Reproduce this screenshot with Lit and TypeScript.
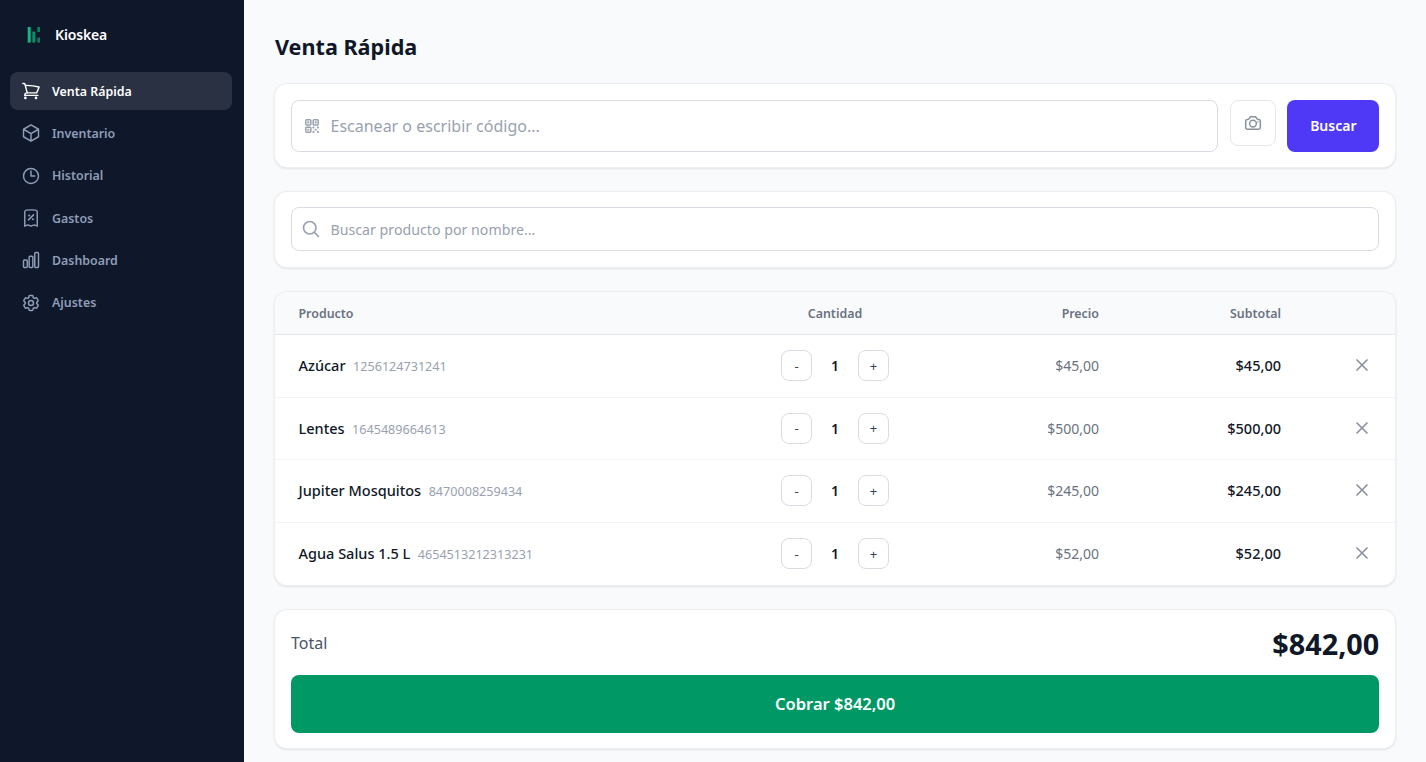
import { LitElement, html, css, svg } from "lit";
import { customElement } from "lit/decorators.js";

const P: Record<string, string> = {
  cart: "M2.25 3h1.386c.51 0 .955.343 1.087.835l.383 1.437M7.5 14.25a3 3 0 0 0-3 3h15.75m-12.75-3h11.218c1.121-2.3 2.1-4.684 2.924-7.138a60.114 60.114 0 0 0-16.536-1.84M7.5 14.25 5.106 5.272M6 20.25a.75.75 0 1 1-1.5 0 .75.75 0 0 1 1.5 0Zm12.75 0a.75.75 0 1 1-1.5 0 .75.75 0 0 1 1.5 0Z",
  cube: "m21 7.5-9-5.25L3 7.5m18 0-9 5.25m9-5.25v9l-9 5.25M3 7.5l9 5.25M3 7.5v9l9 5.25m0-9v9",
  clock: "M12 6v6h4.5m4.5 0a9 9 0 1 1-18 0 9 9 0 0 1 18 0Z",
  receipt: "m9 14.25 6-6m4.5-3.493V21.75l-3.75-1.5-3.75 1.5-3.75-1.5-3.75 1.5V4.757c0-1.108.806-2.057 1.907-2.185a48.507 48.507 0 0 1 11.186 0c1.1.128 1.907 1.077 1.907 2.185ZM9.75 9h.008v.008H9.75V9Zm.375 0a.375.375 0 1 1-.75 0 .375.375 0 0 1 .75 0Zm4.125 4.5h.008v.008h-.008V13.5Zm.375 0a.375.375 0 1 1-.75 0 .375.375 0 0 1 .75 0Z",
  chart: "M3 13.125C3 12.504 3.504 12 4.125 12h2.25c.621 0 1.125.504 1.125 1.125v6.75C7.5 20.496 6.996 21 6.375 21h-2.25A1.125 1.125 0 0 1 3 19.875v-6.75ZM9.75 8.625c0-.621.504-1.125 1.125-1.125h2.25c.621 0 1.125.504 1.125 1.125v11.25c0 .621-.504 1.125-1.125 1.125h-2.25a1.125 1.125 0 0 1-1.125-1.125V8.625ZM16.5 4.125c0-.621.504-1.125 1.125-1.125h2.25C20.496 3 21 3.504 21 4.125v15.75c0 .621-.504 1.125-1.125 1.125h-2.25a1.125 1.125 0 0 1-1.125-1.125V4.125Z",
  cog: "M9.594 3.94c.09-.542.56-.94 1.11-.94h2.593c.55 0 1.02.398 1.11.94l.213 1.281c.063.374.313.686.645.87.074.04.147.083.22.127.325.196.72.257 1.075.124l1.217-.456a1.125 1.125 0 0 1 1.37.49l1.296 2.247a1.125 1.125 0 0 1-.26 1.431l-1.003.827c-.293.241-.438.613-.43.992a7.723 7.723 0 0 1 0 .255c-.008.378.137.75.43.991l1.004.827c.424.35.534.955.26 1.43l-1.298 2.247a1.125 1.125 0 0 1-1.369.491l-1.217-.456c-.355-.133-.75-.072-1.076.124a6.47 6.47 0 0 1-.22.128c-.331.183-.581.495-.644.869l-.213 1.281c-.09.543-.56.94-1.11.94h-2.594c-.55 0-1.019-.398-1.11-.94l-.213-1.281c-.062-.374-.312-.686-.644-.87a6.52 6.52 0 0 1-.22-.127c-.325-.196-.72-.257-1.076-.124l-1.217.456a1.125 1.125 0 0 1-1.369-.49l-1.297-2.247a1.125 1.125 0 0 1 .26-1.431l1.004-.827c.292-.24.437-.613.43-.991a6.932 6.932 0 0 1 0-.255c.007-.38-.138-.751-.43-.992l-1.004-.827a1.125 1.125 0 0 1-.26-1.43l1.297-2.247a1.125 1.125 0 0 1 1.37-.491l1.216.456c.356.133.751.072 1.076-.124.072-.044.146-.086.22-.128.332-.183.582-.495.644-.869l.214-1.28Z M15 12a3 3 0 1 1-6 0 3 3 0 0 1 6 0Z",
  camera: "M6.827 6.175A2.31 2.31 0 0 1 5.186 7.23c-.38.054-.757.112-1.134.175C2.999 7.58 2.25 8.507 2.25 9.574V18a2.25 2.25 0 0 0 2.25 2.25h15A2.25 2.25 0 0 0 21.75 18V9.574c0-1.067-.75-1.994-1.802-2.169a47.865 47.865 0 0 0-1.134-.175 2.31 2.31 0 0 1-1.64-1.055l-.822-1.316a2.192 2.192 0 0 0-1.736-1.039 48.774 48.774 0 0 0-5.232 0 2.192 2.192 0 0 0-1.736 1.039l-.821 1.316Z M16.5 12.75a4.5 4.5 0 1 1-9 0 4.5 4.5 0 0 1 9 0ZM18.75 10.5h.008v.008h-.008V10.5Z",
  search: "m21 21-5.197-5.197m0 0A7.5 7.5 0 1 0 5.196 5.196a7.5 7.5 0 0 0 10.607 10.607Z",
  x: "M6 18 18 6M6 6l12 12",
  qr: "M3.75 4.875c0-.621.504-1.125 1.125-1.125h4.5c.621 0 1.125.504 1.125 1.125v4.5c0 .621-.504 1.125-1.125 1.125h-4.5A1.125 1.125 0 0 1 3.75 9.375v-4.5ZM3.75 14.625c0-.621.504-1.125 1.125-1.125h4.5c.621 0 1.125.504 1.125 1.125v4.5c0 .621-.504 1.125-1.125 1.125h-4.5a1.125 1.125 0 0 1-1.125-1.125v-4.5ZM13.5 4.875c0-.621.504-1.125 1.125-1.125h4.5c.621 0 1.125.504 1.125 1.125v4.5c0 .621-.504 1.125-1.125 1.125h-4.5A1.125 1.125 0 0 1 13.5 9.375v-4.5Z M6.75 6.75h.75v.75h-.75v-.75ZM6.75 16.5h.75v.75h-.75v-.75ZM16.5 6.75h.75v.75h-.75v-.75ZM13.5 13.5h.75v.75h-.75v-.75ZM13.5 19.5h.75v.75h-.75v-.75ZM19.5 13.5h.75v.75h-.75v-.75ZM19.5 19.5h.75v.75h-.75v-.75ZM16.5 16.5h.75v.75h-.75v-.75Z",
};

const icon = (n: string, s: number, w = 2) => html`<svg class="ic" width=${s} height=${s} viewBox="0 0 24 24" fill="none" stroke="currentColor" stroke-width=${w} stroke-linecap="round" stroke-linejoin="round">${svg`<path d=${P[n]}></path>`}</svg>`;

const NAV = [
  ["cart", "Venta Rápida"],
  ["cube", "Inventario"],
  ["clock", "Historial"],
  ["receipt", "Gastos"],
  ["chart", "Dashboard"],
  ["cog", "Ajustes"],
];

const ROWS = [
  ["Azúcar", "1256124731241", "$45,00"],
  ["Lentes", "1645489664613", "$500,00"],
  ["Jupiter Mosquitos", "8470008259434", "$245,00"],
  ["Agua Salus 1.5 L", "4654513212313231", "$52,00"],
];

@customElement("app-root")
export class AppRoot extends LitElement {
  static styles = css`
    :host { display: block; height: 762px; overflow: hidden; font-family: "Noto Sans", "Open Sans", sans-serif; color: #101828; }
    * { box-sizing: border-box; }
    .ic { display: block; flex: none; }
    .app { display: flex; height: 762px; background: #f9fafb; }
    .side { width: 244px; flex: none; background: #0f172a; padding: 0 12px 0 10px; }
    .brand { height: 72px; display: flex; align-items: center; gap: 14px; padding-left: 17px; color: #fff; font-size: 14px; font-weight: 600; letter-spacing: -0.15px; padding-bottom: 3px; }
    .logo { display: block; }
    nav { display: flex; flex-direction: column; gap: 4px; }
    .item { height: 38.3px; display: flex; align-items: center; gap: 11px; padding-left: 11px; border-radius: 8px; color: #8e9db8; font-size: 12.4px; font-weight: 600; }
    .item.on { background: #2a3142; color: #fff; }
    .main { flex: 1; min-width: 0; padding: 30px 30.7px 0 31px; display: flex; flex-direction: column; }
    h1 { margin: 0 0 20px; font-size: 21.6px; line-height: 34px; font-weight: 700; color: #101828; }
    .card { background: #fff; border-radius: 12px; box-shadow: 0 0 0 1px #eceef1, 0 1px 3px rgba(16,24,40,.2); margin-bottom: 25px; }
    .scan { display: flex; align-items: flex-start; padding: 16px; height: 83px; gap: 12px; }
    .field { flex: 1; display: flex; align-items: center; border: 1px solid #d9dce2; border-radius: 8px; background: #fff; padding-left: 9px; gap: 9.5px; color: #99a1af; }
    .field input { flex: 1; border: 0; outline: 0; background: transparent; font-family: inherit; min-width: 0; padding: 0; color: #101828; }
    .field input::placeholder { color: #99a1af; opacity: 1; }
    .f1 { height: 52px; }
    .f1 .ic { margin-left: 2px; }
    .f1 input { font-size: 16px; }
    .f2 { height: 44px; }
    .f2 input { font-size: 14.2px; }
    .cam { width: 46px; height: 46px; border: 1px solid #e5e7eb; border-radius: 8px; background: #fff; color: #8a919e; display: flex; align-items: center; justify-content: center; padding: 0; }
    .buscar { width: 92px; height: 52px; margin-left: -0.5px; border: 0; border-radius: 8px; background: #4f39f6; color: #fff; font: 600 14px "Noto Sans", sans-serif; padding: 0 0 2px; }
    .search { padding: 15px 16px; height: 75px; }
    .table { overflow: hidden; height: 293px; }
    .row { display: grid; grid-template-columns: 458.5px 156px 186px 182px 1fr; align-items: center; padding-left: 23.5px; }
    .head { height: 43px; background: #f9fafb; border-bottom: 1px solid #e5e7eb; font-size: 12.4px; font-weight: 600; color: #6a7282; }
    .body { height: 62.5px; border-bottom: 1px solid #f3f4f6; }
    .body:last-child { border-bottom: 0; }
    .c { text-align: center; }
    .r { text-align: right; }
    .prod { padding-bottom: 1px; }
    .pname { font-size: 14.5px; font-weight: 500; color: #101828; }
    .code { font-size: 12.6px; color: #99a1af; margin-left: 7.5px; }
    .qty { display: flex; align-items: center; justify-content: center; }
    .qty button { width: 31px; height: 31px; border: 1px solid #d9dce2; border-radius: 8px; background: #fff; color: #364153; font: 400 13px "Noto Sans", sans-serif; padding: 0; }
    .qty span { width: 46px; text-align: center; font-size: 14px; font-weight: 600; color: #101828; }
    .price { font-size: 14px; color: #6a7282; }
    .sub { font-size: 14.5px; font-weight: 500; color: #101828; padding-bottom: 1px; }
    .del { display: flex; justify-content: flex-end; padding: 0 23px 1px 0; color: #8a919e; }
    .pay { padding: 16px; height: 138px; margin-bottom: 0; }
    .tot { display: flex; align-items: center; justify-content: space-between; height: 34px; margin-bottom: 14.5px; }
    .tot .l { font-size: 16px; color: #4a5565; }
    .tot .v { font-size: 28.8px; font-weight: 700; color: #101828; }
    .cobrar { display: block; width: 100%; height: 58px; border: 0; border-radius: 8px; background: #009966; color: #fff; font: 600 16.5px "Noto Sans", sans-serif; }
  `;

  render() {
    return html`<div class="app">
      <aside class="side">
        <div class="brand">
          <svg class="logo" width="14" height="18" viewBox="0 0 14 18"><rect x="0.7" y="1" width="3" height="15.6" fill="#10b981"></rect><rect x="5.3" y="5.6" width="3" height="11" fill="#0b8f68"></rect><rect x="10.3" y="1" width="2.7" height="5" fill="#0a7d5c"></rect><rect x="10.3" y="11.6" width="2.7" height="5" fill="#0a7d5c"></rect></svg>
          <span>Kioskea</span>
        </div>
        <nav>
          ${NAV.map(([i, t], k) => html`<div class="item ${k === 0 ? "on" : ""}">${icon(i, 20, 1.75)}<span>${t}</span></div>`)}
        </nav>
      </aside>
      <main class="main">
        <h1>Venta Rápida</h1>
        <section class="card scan">
          <div class="field f1">${icon("qr", 18)}<input placeholder="Escanear o escribir código..." /></div>
          <button class="cam">${icon("camera", 18)}</button>
          <button class="buscar">Buscar</button>
        </section>
        <section class="card search">
          <div class="field f2">${icon("search", 20)}<input placeholder="Buscar producto por nombre..." /></div>
        </section>
        <section class="card table">
          <div class="row head"><div>Producto</div><div class="c">Cantidad</div><div class="r">Precio</div><div class="r">Subtotal</div><div></div></div>
          ${ROWS.map(([n, c, p]) => html`<div class="row body">
            <div class="prod"><span class="pname">${n}</span><span class="code">${c}</span></div>
            <div class="qty"><button>-</button><span>1</span><button>+</button></div>
            <div class="r price">${p}</div>
            <div class="r sub">${p}</div>
            <div class="del">${icon("x", 20)}</div>
          </div>`)}
        </section>
        <section class="card pay">
          <div class="tot"><span class="l">Total</span><span class="v">$842,00</span></div>
          <button class="cobrar">Cobrar $842,00</button>
        </section>
      </main>
    </div>`;
  }
}
